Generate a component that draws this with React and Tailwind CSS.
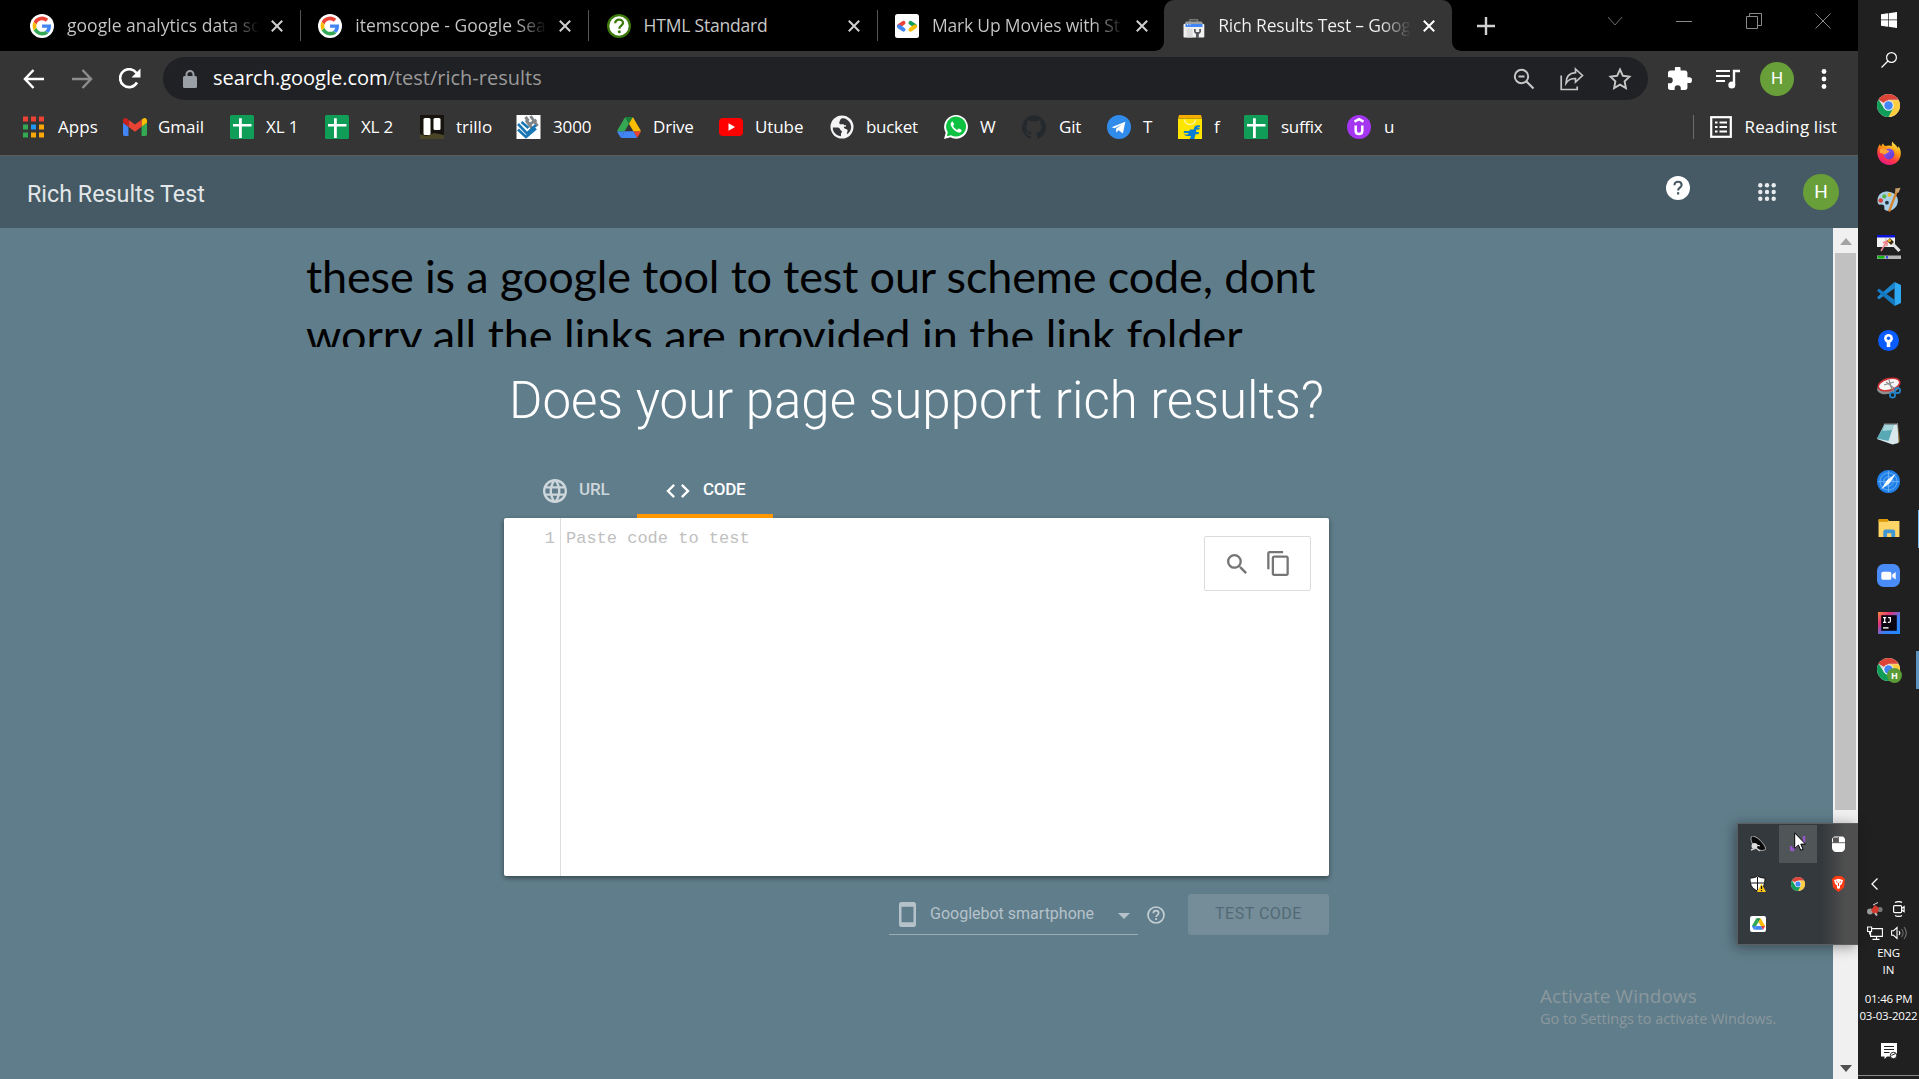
import React from "react";

/* ---------- icons ---------- */
const GoogleG = () => (
  <svg viewBox="0 0 24 24" className="h-6 w-6 shrink-0">
    <circle cx="12" cy="12" r="12" fill="#fff" />
    <g transform="translate(2.6 2.6) scale(.785)">
      <path fill="#4285F4" d="M23.5 12.3c0-.9-.1-1.5-.2-2.2H12v4.2h6.600c-.1 1.100-.8 2.800-2.400 3.900l3.600 2.800c2.300-2.100 3.700-5.100 3.700-8.700z" />
      <path fill="#34A853" d="M12 24c3.200 0 6-1.100 7.900-2.900l-3.700-2.900c-1 .7-2.400 1.200-4.200 1.200-3.200 0-5.900-2.100-6.900-5l-3.800 3C3.300 21.300 7.300 24 12 24z" />
      <path fill="#FBBC05" d="M5.100 14.400c-.3-.8-.4-1.600-.4-2.400s.2-1.600.4-2.400L1.300 6.600C.5 8.200 0 10 0 12s.5 3.800 1.300 5.400z" />
      <path fill="#EA4335" d="M12 4.700c2.200 0 3.700 1 4.600 1.800L20 3.200C18 1.200 15.200 0 12 0 7.300 0 3.300 2.700 1.300 6.600l3.800 3c1-2.900 3.700-4.900 6.900-4.900z" />
    </g>
  </svg>
);

const WhatwgIcon = () => (
  <svg viewBox="0 0 24 24" className="h-6 w-6 shrink-0">
    <circle cx="12" cy="12" r="12" fill="#3c790a" />
    <circle cx="12" cy="12" r="9.700" fill="#fff" />
    <path d="M8.200 9.200c0-2.200 1.700-3.600 3.900-3.600s3.900 1.400 3.900 3.400c0 2.700-3.700 2.700-3.700 5.800" fill="none" stroke="#3c790a" strokeWidth="2.300" />
    <circle cx="12.300" cy="17.700" r="1.500" fill="#3c790a" />
  </svg>
);

const DevelopersIcon = () => (
  <svg viewBox="0 0 24 24" className="h-6 w-6 shrink-0">
    <rect width="24" height="24" rx="2.500" fill="#fff" />
    <g strokeWidth="4" strokeLinecap="round">
      <path d="M8.500 8.800L4 11.900" stroke="#ea4335" />
      <path d="M4 12.500l4.500 3.100" stroke="#4285f4" />
      <path d="M15.500 8.800l4.500 3.100" stroke="#0f9d58" />
      <path d="M20 12.500l-4.500 3.100" stroke="#fbbc04" />
    </g>
  </svg>
);

const ToolboxIcon = () => (
  <svg viewBox="0 0 24 24" className="h-6 w-6 shrink-0">
    <path d="M8 8V5.800h7.500V8" fill="none" stroke="#777" strokeWidth="1.500" />
    <path d="M4 7.500h15.500l2.800 4H1.500z" fill="#9a9fa6" />
    <rect x="1.500" y="10" width="20.800" height="13.500" rx=".8" fill="#f1f1f1" />
    <rect x="3.500" y="10" width="17" height="3" fill="#4285f4" />
    <path d="M5 10.700h1M7.500 10.700h1" stroke="#fff" />
    <rect x="4.500" y="14.500" width="6" height="9" fill="#dcdcdc" />
    <path d="M12 15v3l2 2.300V24h2.800v-3.700l2.200-2.300v-3h-1.800v3h-3.400v-3z" fill="#55585c" />
  </svg>
);

const SheetPlus = () => (
  <svg viewBox="0 0 24 24" className="h-6 w-6 shrink-0">
    <rect width="24" height="24" rx="1.500" fill="#0f9d58" />
    <path d="M9 3.200h2.800v5.800h9.700v2.500h-9.700v11.500H9V11.500H3V9h6z" fill="#fff" />
  </svg>
);

const DriveIcon = ({ className }) => (
  <svg viewBox="0 0 87.300 78" className={className}>
    <path d="m6.600 66.850 3.850 6.650c.8 1.400 1.950 2.500 3.300 3.300l13.750-23.800h-27.500c0 1.550.4 3.100 1.200 4.500z" fill="#4285f4" />
    <path d="m43.650 25-13.750-23.800c-1.350.8-2.500 1.900-3.300 3.300l-25.400 44a9.060 9.060 0 0 0 -1.200 4.500h27.500z" fill="#34a853" />
    <path d="m73.550 76.800c1.350-.8 2.500-1.900 3.300-3.300l1.600-2.750 7.650-13.250c.8-1.400 1.200-2.950 1.200-4.500h-27.500l5.850 11.500z" fill="#ea4335" />
    <path d="m43.650 25 13.750-23.800c-1.350-.8-2.900-1.200-4.500-1.200h-18.500c-1.600 0-3.150.45-4.500 1.200z" fill="#188038" />
    <path d="m59.800 53h-32.300l-13.750 23.800c1.350.8 2.900 1.200 4.500 1.200h50.800c1.600 0 3.150-.45 4.500-1.200z" fill="#4285f4" />
    <path d="m73.400 26.500-12.700-22c-.8-1.400-1.950-2.500-3.300-3.300l-13.750 23.800 16.150 28h27.450c0-1.550-.4-3.100-1.200-4.500z" fill="#fbbc04" />
  </svg>
);

const ChromeIcon = ({ className }) => (
  <svg viewBox="0 0 24 24" className={className}>
    <circle cx="12" cy="12" r="12" fill="#e0e0e0" />
    <path d="M12 12L1.610 6A12 12 0 0 1 22.390 6H12z" fill="#db4437" />
    <path d="M12 6.500h10.680A12 12 0 0 1 12 24l4.800-9z" fill="#ffcd40" />
    <path d="M1.610 6A12 12 0 0 0 12 24l4.800-9.200L7.200 14.700z" fill="#0f9d58" />
    <circle cx="12" cy="12" r="5.500" fill="#f1f1f1" />
    <circle cx="12" cy="12" r="4.400" fill="#4285f4" />
  </svg>
);

const AppsIcon = () => (
  <svg viewBox="0 0 21 21" className="h-[22px] w-[21px] shrink-0">
    <g fill="#ea4335"><rect width="5" height="5" /><rect x="8" width="5" height="5" /><rect x="16" width="5" height="5" /></g>
    <rect y="8" width="5" height="5" fill="#34a853" />
    <rect x="8" y="8" width="5" height="5" fill="#2196f3" />
    <rect x="16" y="8" width="5" height="5" fill="#fba705" />
    <rect y="16" width="5" height="5" fill="#34a853" />
    <rect x="8" y="16" width="5" height="5" fill="#fba705" />
    <rect x="16" y="16" width="5" height="5" fill="#fba705" />
  </svg>
);

const GmailIcon = () => (
  <svg viewBox="52 42 88 66" className="h-[18px] w-6 shrink-0">
    <path fill="#4285f4" d="M58 108h14V74L52 59v43c0 3.320 2.690 6 6 6" />
    <path fill="#34a853" d="M120 108h14c3.320 0 6-2.690 6-6V59l-20 15" />
    <path fill="#fbbc04" d="M120 48v26l20-15v-8c0-7.420-8.470-11.650-14.400-7.200" />
    <path fill="#ea4335" d="M72 74V48l24 18 24-18v26L96 92" />
    <path fill="#c5221f" d="M52 51v8l20 15V48l-5.600-4.200c-5.940-4.450-14.400-.22-14.400 7.200" />
  </svg>
);

const TrelloPhotoIcon = () => (
  <svg viewBox="0 0 24 24" className="h-6 w-6 shrink-0">
    <rect width="24" height="24" fill="#17140f" />
    <path d="M0 19l6 2 8-3 10 2v4H0z" fill="#4b4528" />
    <rect x="3.500" y="3" width="7" height="17" rx="1.500" fill="#fff" />
    <rect x="13.500" y="3" width="7" height="12" rx="1.500" fill="#fff" />
  </svg>
);

const ThreeThousandIcon = () => (
  <svg viewBox="0 0 24 24" className="h-6 w-[25px] shrink-0">
    <rect width="24" height="24" fill="#fff" />
    <g fill="none" strokeWidth="3">
      <path d="M9 2l3 4M14 1l7 10M12 10l8-5M9.500 5l7 9.500" stroke="#808487" />
      <path d="M1.500 9l9 9.500 9-8.500M1.500 14.500l8 7.500 10-8.500M5 7l7 6" stroke="#1976b5" strokeWidth="2.600" />
    </g>
  </svg>
);

const YoutubeIcon = () => (
  <svg viewBox="0 0 24 18" className="h-[18px] w-6 shrink-0">
    <rect width="24" height="18" rx="4" fill="#f00" />
    <path d="M9.500 5.200v7.600l6.600-3.800z" fill="#fff" />
  </svg>
);

const GlobeIcon = () => (
  <svg viewBox="0 0 24 24" className="h-6 w-6 shrink-0">
    <circle cx="12" cy="12" r="11.500" fill="#f4f4f4" />
    <path d="M2.800 12.500c2.700 0 4.200-.3 6 .3 1.200.5 1 2 2.200 2.600 1.200.5 1.200 1.600.3 2.500-.8.900.2 2.200-.6 3.300C6 20.600 2.700 17 2.800 12.500z" fill="#35363a" />
    <path d="M10.300 4.800c1-1.700 4-1.800 5.700-.8 3 1.500 5 4.500 5.200 8-.2 3.500-2 6-4.200 7.300-.6-1.500.8-2.500.6-4-.3-1.500-2.600-1-3.500-2.300-.9-1.500.8-2.700-.3-3.500-1.500-.8-3.300.5-4.300-.8-.8-1.500.5-2.500.8-3.900z" fill="#35363a" />
    <path d="M12 11.300l4-.5" stroke="#f4f4f4" strokeWidth="1.400" />
  </svg>
);

const WhatsappIcon = () => (
  <svg viewBox="0 0 24 24" className="h-6 w-6 shrink-0">
    <path d="M0 24l1.700-6.200A11.900 11.900 0 1 1 6.300 22.300z" fill="#fff" />
    <path d="M2.800 21.200l1-4A10 10 0 1 1 7 20.200z" fill="#0dc143" />
    <path d="M8.200 6.500c-1.700 1-2 2.800-.8 5 1.500 2.800 3.800 4.800 6.300 5.800 2 .8 3.500 0 4-1.800.2-.7-2.700-2.200-3.200-2l-1.300 1.400c-1.800-.7-3.200-2-4.100-3.800l1-1.400c.1-.5-1-3-1.900-3.200z" fill="#fff" />
  </svg>
);

const GithubIcon = () => (
  <svg viewBox="0 0 24 24" className="h-6 w-6 shrink-0">
    <path fill="#24292e" d="M12 .3a12 12 0 0 0-3.800 23.400c.6.1.8-.3.8-.6v-2c-3.300.7-4-1.600-4-1.600-.6-1.400-1.400-1.800-1.400-1.800-1-.7.1-.7.1-.7 1.200 0 1.900 1.200 1.900 1.200 1 1.800 2.800 1.300 3.500 1 0-.8.4-1.300.7-1.600-2.700-.3-5.500-1.300-5.500-6 0-1.200.5-2.300 1.300-3.100-.2-.4-.6-1.600 0-3.200 0 0 1-.3 3.400 1.200a11.500 11.500 0 0 1 6 0c2.300-1.500 3.300-1.200 3.300-1.200.6 1.600.2 2.800 0 3.200.9.800 1.300 1.900 1.300 3.200 0 4.600-2.800 5.600-5.500 5.900.5.400.9 1 .9 2.200v3.300c0 .3.100.7.800.6A12 12 0 0 0 12 .3" />
  </svg>
);

const TelegramIcon = () => (
  <svg viewBox="0 0 24 24" className="h-6 w-6 shrink-0">
    <circle cx="12" cy="12" r="12" fill="#318bea" />
    <path d="M4.500 12.200l13.800-5.500-2.400 11.800-4.300-3.200-2.300 2.300-.3-3.900 5.500-4.200-6.700 3.700z" fill="#fff" />
  </svg>
);

const FlipkartIcon = () => (
  <svg viewBox="0 0 24 24" className="h-6 w-6 shrink-0">
    <path d="M0 3.500h24V24H0z" fill="#ffe500" />
    <path d="M1 0h22l1 3.500H0z" fill="#f5ae00" />
    <path d="M6.500 4.500c.5 6.500 10.500 6.500 11 0" fill="none" stroke="#fff6a8" strokeWidth="1.300" />
    <path d="M22 10.500c-4.500-.8-5.800 1.200-6.300 4H12l-.7 1.600h-5l-.8 2h5.200l-1 1.400H5.500l3 1.500H13L11.800 24h4.500l1.200-4.800h3l.5-2.200h-3l.5-2.500h2.800l.5-1.800h-2.600c.3-.6 1-.7 2.500-.5z" fill="#047bd5" />
  </svg>
);

const UdemyIcon = () => (
  <svg viewBox="0 0 24 24" className="h-6 w-6 shrink-0">
    <circle cx="12" cy="12" r="12" fill="#a435f0" />
    <path d="M7.500 6.700L12 4.200l4.500 2.500M8.700 10.500v5.300c0 2 1.300 3.300 3.300 3.300s3.300-1.300 3.300-3.300v-5.300" fill="none" stroke="#fff" strokeWidth="2.500" />
  </svg>
);

const Cross = ({ className }) => (
  <svg viewBox="0 0 12 12" className={className}>
    <path d="M.8.800l10.400 10.400M11.200.800L.8 11.200" stroke="currentColor" strokeWidth="2" fill="none" />
  </svg>
);

/* ---------- browser chrome ---------- */
const ui = "font-['Open_Sans','Noto_Sans',sans-serif]";

const fadeDim = "bg-linear-to-r from-[#c8c8c8] from-84% to-transparent bg-clip-text text-transparent";
const fadeLit = "bg-linear-to-r from-[#f4f4f4] from-84% to-transparent bg-clip-text text-transparent";

const tabs = [
  { icon: <GoogleG />, title: "google analytics data sc", track: "tracking-[0.03px]", fade: true, divider: true },
  { icon: <GoogleG />, title: "itemscope - Google Sea", track: "tracking-[0px]", fade: true, divider: true },
  { icon: <WhatwgIcon />, title: "HTML Standard", track: "tracking-[-0.2px]", fade: false, divider: true },
  { icon: <DevelopersIcon />, title: "Mark Up Movies with St", track: "tracking-[-0.18px]", fade: true, divider: false },
];

function Tab({ icon, title, track, fade, divider }) {
  return (
    <div className="flex h-[51px] w-[288.300px] shrink-0 items-center pl-[13px]">
      {icon}
      <span className={`mb-px ml-[13px] w-[192px] overflow-hidden text-[17.500px] leading-6 whitespace-nowrap ${track} ${fade ? fadeDim : "text-[#c8c8c8]"}`}>{title}</span>
      <Cross className="ml-[12px] h-3 w-3 shrink-0 text-[#d0d0d0]" />
      <span className={`ml-[17px] h-[31px] w-px shrink-0 ${divider ? "bg-[#555]" : "bg-transparent"}`} />
    </div>
  );
}

function TabStrip() {
  return (
    <div className="flex h-[51px] bg-black pl-[17px]">
      {tabs.map((t) => (
        <Tab key={t.title} {...t} />
      ))}
      <div className="relative -ml-[6px] flex h-[51px] w-[288px] shrink-0 items-center rounded-t-[10px] bg-[#353535] pl-[18px]">
        <svg viewBox="0 0 10 10" className="absolute bottom-0 -left-[10px] h-[10px] w-[10px]"><path d="M10 0v10H0C6 10 10 6 10 0z" fill="#353535" /></svg>
        <svg viewBox="0 0 10 10" className="absolute -right-[10px] bottom-0 h-[10px] w-[10px]"><path d="M0 0v10h10C4 10 0 6 0 0z" fill="#353535" /></svg>
        <ToolboxIcon />
        <span className={`mb-px ml-3 w-[193px] overflow-hidden text-[17.500px] leading-6 tracking-[-0.2px] whitespace-nowrap ${fadeLit}`}>Rich Results Test – Goog</span>
        <Cross className="ml-[12px] h-3 w-3 shrink-0 text-white" />
      </div>
      <div className="flex flex-1 items-center justify-between pr-[27px] pl-[25px]">
        <svg viewBox="0 0 18 18" className="h-[18px] w-[18px]"><path d="M9 0v18M0 9h18" stroke="#d0d0d0" strokeWidth="2.400" /></svg>
        <div className="mb-[9px] flex items-center gap-[53.500px] text-[#8a8a8a]">
          <svg viewBox="0 0 16 10" className="h-[10px] w-4"><path d="M1 1l7 8 7-8" fill="none" stroke="#6a6a6a" /></svg>
          <svg viewBox="0 0 16 16" className="h-4 w-4"><path d="M0 8.500h16" stroke="currentColor" /></svg>
          <svg viewBox="0 0 16 16" className="h-4 w-4"><path d="M.5 3.500h11v12H.5zM3.500 3V.5h12v12H12" fill="none" stroke="currentColor" /></svg>
          <svg viewBox="0 0 16 16" className="h-4 w-4"><path d="M.5.500l15 15M15.500.500l-15 15" stroke="currentColor" /></svg>
        </div>
      </div>
    </div>
  );
}

function Toolbar() {
  return (
    <div className="flex h-[55px] items-center bg-[#353535] pl-[23px]">
      <svg viewBox="0 0 22 20" className="h-5 w-[22px]"><path d="M10.500 1L2 10l8.500 9M2 10h19" fill="none" stroke="#fff" strokeWidth="2.500" /></svg>
      <svg viewBox="0 0 22 20" className="ml-[26px] h-5 w-[22px]"><path d="M11.500 1L20 10l-8.500 9M20 10H1" fill="none" stroke="#8c8c8c" strokeWidth="2.500" /></svg>
      <svg viewBox="0 0 22 22" className="ml-[26px] h-[22px] w-[22px]"><path d="M18 14.500A9 9 0 1 1 17.500 5" fill="none" stroke="#fff" strokeWidth="2.600" /><path d="M21.500.5v9h-9z" fill="#fff" /></svg>
      <div className="ml-[22px] flex h-[43px] w-[1485px] items-center rounded-full bg-[#202124] pr-[16px] pl-[20px]">
        <svg viewBox="0 0 14 18" className="h-[18px] w-[14px]"><rect y="6" width="14" height="12" rx="1.500" fill="#9aa0a6" /><path d="M3.500 7V4.500a3.500 3.500 0 0 1 7 0V7" fill="none" stroke="#9aa0a6" strokeWidth="2" /></svg>
        <span className="mb-[2px] ml-[16px] flex-1 text-[20px] leading-7 text-[#9a9a9a]"><span className="text-white">search.google.com</span>/test/rich-results</span>
        <div className="flex items-center gap-[25px] text-[#c6c6c6]">
          <svg viewBox="0 0 22 22" className="h-[22px] w-[22px]"><circle cx="8.500" cy="8.500" r="6.700" fill="none" stroke="currentColor" strokeWidth="2" /><path d="M5.500 8.500h6M13.500 13.500l7 7" stroke="currentColor" strokeWidth="2.200" /></svg>
          <svg viewBox="0 0 24 24" className="h-6 w-6"><path d="M1.200 8.500v14h16v-3" fill="none" stroke="currentColor" strokeWidth="1.700" /><path d="M15.500 2l7 6.500-7 6.500v-3.500c-4.500 0-7.500 1.300-9.500 4.700 0-6 3-10 9.500-10.500z" fill="none" stroke="currentColor" strokeWidth="1.700" /></svg>
          <svg viewBox="0 0 24 24" className="-ml-px h-6 w-6"><path d="M12 2.500l2.900 6.300 6.600.8-4.900 4.700 1.300 6.800-5.900-3.400-5.900 3.400 1.300-6.800-4.900-4.700 6.600-.8z" fill="none" stroke="currentColor" strokeWidth="1.900" /></svg>
        </div>
      </div>
      <div className="flex flex-1 items-center pl-[20px]">
        <svg viewBox="2 2 21 20" className="h-[23px] w-[24px]"><path fill="#fff" d="M20.500 11H19V7c0-1.100-.9-2-2-2h-4V3.500a2.500 2.500 0 0 0-5 0V5H4c-1.100 0-2 .9-2 2v3.800h1.500a2.700 2.700 0 0 1 0 5.400H2V20c0 1.100.9 2 2 2h3.800v-1.500a2.700 2.700 0 0 1 5.400 0V22H17c1.100 0 2-.9 2-2v-4h1.500a2.500 2.500 0 0 0 0-5z" /></svg>
        <svg viewBox="0 0 24 20" className="ml-[24px] h-5 w-6"><path d="M0 2h14M0 7h14M0 12h9" stroke="#fff" strokeWidth="2.200" /><path d="M18 16V2h6" fill="none" stroke="#fff" strokeWidth="2.400" /><circle cx="15.800" cy="16" r="3.500" fill="#fff" /></svg>
        <span className="ml-[20px] flex h-[34px] w-[34px] items-center justify-center rounded-full bg-[#689f38] font-[Roboto,sans-serif] text-[17px] text-white">H</span>
        <svg viewBox="0 0 6 20" className="ml-[27px] h-5 w-[6px]"><g fill="#fff"><circle cx="3" cy="2.500" r="2.400" /><circle cx="3" cy="10" r="2.400" /><circle cx="3" cy="17.500" r="2.400" /></g></svg>
      </div>
    </div>
  );
}

const bookmarks = [
  { icon: <AppsIcon />, label: "Apps", box: "w-[100px] gap-[14px]", track: "tracking-[0.1px]" },
  { icon: <GmailIcon />, label: "Gmail", box: "w-[107px] gap-[11px]", track: "tracking-[0px]" },
  { icon: <SheetPlus />, label: "XL 1", box: "w-[95px] gap-3", track: "tracking-[-0.1px]" },
  { icon: <SheetPlus />, label: "XL 2", box: "w-[95px] gap-3", track: "tracking-[-0.2px]" },
  { icon: <TrelloPhotoIcon />, label: "trillo", box: "w-[96px] gap-3", track: "tracking-[0px]" },
  { icon: <ThreeThousandIcon />, label: "3000", box: "w-[101px] gap-3", track: "tracking-[-0.1px]" },
  { icon: <DriveIcon className="h-[21px] w-6 shrink-0" />, label: "Drive", box: "w-[102px] gap-3", track: "tracking-[-0.2px]" },
  { icon: <YoutubeIcon />, label: "Utube", box: "w-[111px] gap-3", track: "tracking-[-0.1px]" },
  { icon: <GlobeIcon />, label: "bucket", box: "w-[114px] gap-3", track: "tracking-[-0.3px]" },
  { icon: <WhatsappIcon />, label: "W", box: "w-[78px] gap-3", track: "tracking-[-0.4px]" },
  { icon: <GithubIcon />, label: "Git", box: "w-[85px] gap-[13px]", track: "tracking-[-0.2px]" },
  { icon: <TelegramIcon />, label: "T", box: "w-[71px] gap-3", track: "tracking-[-0.4px]" },
  { icon: <FlipkartIcon />, label: "f", box: "w-[66px] gap-3", track: "tracking-[-0.4px]" },
  { icon: <SheetPlus />, label: "suffix", box: "w-[103px] gap-[13px]", track: "tracking-[-0.3px]" },
  { icon: <UdemyIcon />, label: "u", box: "w-[60px] gap-[13px]", track: "tracking-[-0.4px]" },
];

function BookmarksBar() {
  return (
    <div className="flex h-[50px] items-center border-b border-[#5f5c5d] bg-[#353535] pb-[7px] pl-[23px] text-[17px] leading-6 text-white">
      {bookmarks.map((b) => (
        <div key={b.label} className={`flex shrink-0 items-center whitespace-nowrap ${b.box}`}>
          {b.icon}
          <span className={b.track}>{b.label}</span>
        </div>
      ))}
      <div className="ml-auto flex items-center pr-[21px]">
        <span className="h-6 w-px bg-[#6c6c6c]" />
        <svg viewBox="0 0 22 22" className="ml-4 h-[22px] w-[22px]"><rect x="1.200" y="1.200" width="19.600" height="19.600" fill="none" stroke="#fff" strokeWidth="2.200" /><path d="M5 6.500h2.500M5 11h2.500M5 15.500h2.500M9.500 6.500H17M9.500 11H17M9.500 15.500H17" stroke="#fff" strokeWidth="2" /></svg>
        <span className="ml-[13px] tracking-[0.12px]">Reading list</span>
      </div>
    </div>
  );
}

/* ---------- page ---------- */
function PageHeader() {
  return (
    <header className="flex h-[72px] items-center bg-[#455a64] pr-[19px] pl-[27px] font-[Roboto,sans-serif]">
      <h1 className="flex-1 pt-[3px] text-[23.300px] leading-8 text-[#e3e7e9]">Rich Results Test</h1>
      <svg viewBox="0 0 24 24" className="mb-[9px] h-[24px] w-[24px]"><circle cx="12" cy="12" r="12" fill="#fff" /><path d="M8.500 9.200c0-2.100 1.500-3.500 3.600-3.500s3.500 1.300 3.500 3.200c0 2.600-3.500 2.900-3.500 5.600" fill="none" stroke="#455a64" strokeWidth="2.100" /><rect x="11" y="16.200" width="2.200" height="2.300" fill="#455a64" /></svg>
      <svg viewBox="0 0 18 18" className="ml-[68px] h-[18px] w-[18px]"><g fill="#e9ecee"><circle cx="2.300" cy="2.300" r="2.200" /><circle cx="9" cy="2.300" r="2.200" /><circle cx="15.700" cy="2.300" r="2.200" /><circle cx="2.300" cy="9" r="2.200" /><circle cx="9" cy="9" r="2.200" /><circle cx="15.700" cy="9" r="2.200" /><circle cx="2.300" cy="15.700" r="2.200" /><circle cx="9" cy="15.700" r="2.200" /><circle cx="15.700" cy="15.700" r="2.200" /></g></svg>
      <span className="ml-[27px] flex h-9 w-9 items-center justify-center rounded-full bg-[#689f38] pt-px text-[19px] text-white">H</span>
    </header>
  );
}

function CodeCard() {
  return (
    <div className="flex h-[358px] w-[825px] rounded-[2px] bg-white font-['Liberation_Mono',monospace] text-[17px] text-[#c0c0c0] shadow-[0_2px_5px_rgba(0,0,0,0.45)]">
      <div className="h-full w-[57px] border-r border-[#ddd] pt-[9px] pr-[5px] text-right leading-6">1</div>
      <div className="flex-1 pt-[9px] pl-[5px] leading-6">Paste code to test</div>
      <div className="mt-[18px] mr-[18px] flex h-[55px] w-[107px] items-center justify-center gap-[20px] rounded-[2px] border border-[#dcdcdc]">
        <svg viewBox="3 3 17.500 17.500" className="h-5 w-5"><path fill="#757575" d="M15.500 14h-.79l-.28-.27A6.470 6.470 0 0 0 16 9.500 6.500 6.500 0 1 0 9.500 16c1.610 0 3.090-.59 4.230-1.570l.27.28v.79l5 4.990L20.490 19l-4.990-5zm-6 0a4.500 4.500 0 1 1 0-9 4.500 4.500 0 0 1 0 9z" /></svg>
        <svg viewBox="2 1 19 22" className="h-[25px] w-[22px]"><path fill="#757575" d="M16 1H4c-1.100 0-2 .9-2 2v14h2V3h12V1zm3 4H8c-1.100 0-2 .9-2 2v14c0 1.100.9 2 2 2h11c1.100 0 2-.9 2-2V7c0-1.100-.9-2-2-2zm0 16H8V7h11v14z" /></svg>
      </div>
    </div>
  );
}

function Main() {
  return (
    <main className="flex-1 overflow-hidden bg-[#607d8b]">
      <div className="ml-[306px] h-[119px] overflow-hidden pt-[19px] font-[Lato,sans-serif] text-[45px] leading-[58.600px] whitespace-nowrap text-black">
        <p className="tracking-[-0.14px]">these is a google tool to test our scheme code, dont</p>
        <p className="tracking-[-0.04px]">worry all the links are provided in the link folder</p>
      </div>
      <div className="ml-[504px] w-[825px] font-[Roboto,sans-serif]">
        <h2 className="mt-[24px] text-center text-[51px] leading-[60px] font-light whitespace-nowrap text-white">Does your page support rich results?</h2>
        <div className="mt-[28px] flex h-[59px] text-[17px] font-medium">
          <div className="flex w-[133px] items-center gap-3 pt-1 pl-[39px] text-[#cdd6da]">
            <svg viewBox="2 2 20 20" className="h-6 w-6"><path fill="currentColor" d="M11.990 2C6.470 2 2 6.480 2 12s4.470 10 9.990 10C17.520 22 22 17.520 22 12S17.520 2 11.990 2zm6.930 6h-2.950a15.650 15.650 0 0 0-1.380-3.560A8.030 8.030 0 0 1 18.920 8zM12 4.040c.83 1.200 1.480 2.530 1.910 3.960h-3.820c.43-1.430 1.080-2.760 1.910-3.960zM4.260 14C4.100 13.360 4 12.690 4 12s.1-1.360.26-2h3.380c-.08.660-.14 1.320-.14 2s.06 1.340.14 2H4.260zm.82 2h2.950c.32 1.250.78 2.450 1.380 3.560A7.990 7.990 0 0 1 5.080 16zm2.950-8H5.080a7.990 7.990 0 0 1 4.330-3.560A15.650 15.650 0 0 0 8.030 8zM12 19.960c-.83-1.200-1.480-2.530-1.910-3.960h3.820A14.090 14.090 0 0 1 12 19.960zM14.340 14H9.660c-.09-.66-.16-1.320-.16-2s.07-1.350.16-2h4.680c.09.65.16 1.320.16 2s-.07 1.340-.16 2zm.25 5.560c.6-1.110 1.060-2.310 1.380-3.560h2.950a8.030 8.030 0 0 1-4.330 3.560zM16.360 14c.08-.66.14-1.320.14-2s-.06-1.340-.14-2h3.380c.16.64.26 1.310.26 2s-.1 1.360-.26 2h-3.380z" /></svg>
            <span className="pb-px tracking-[-0.1px]">URL</span>
          </div>
          <div className="flex w-[136px] items-center gap-[13px] border-b-4 border-[#ff9800] pt-2 pl-[29px] text-white">
            <svg viewBox="2 6 20 12" className="h-[14px] w-6"><path fill="currentColor" d="M9.400 16.600L4.800 12l4.600-4.600L8 6l-6 6 6 6 1.400-1.400zm5.200 0l4.600-4.600-4.600-4.600L16 6l6 6-6 6-1.400-1.400z" /></svg>
            <span className="pb-px tracking-[-0.3px]">CODE</span>
          </div>
        </div>
        <CodeCard />
        <div className="mt-[18px] flex h-[41px] justify-end">
          <div className="flex h-[41px] w-[249px] items-center border-b border-[#9aabb4] pl-[10px] text-[#b5c2c9]">
            <svg viewBox="0 0 17 25" className="h-[25px] w-[17px]"><path fill="currentColor" fillRule="evenodd" d="M2.500 0h12A2.500 2.500 0 0 1 17 2.500v20a2.500 2.500 0 0 1-2.500 2.500h-12A2.500 2.500 0 0 1 0 22.500v-20A2.500 2.500 0 0 1 2.500 0zM2.500 4.700v15.600h12V4.700z" /></svg>
            <span className="mb-px ml-[14px] text-[16px] leading-6 whitespace-nowrap">Googlebot smartphone</span>
            <svg viewBox="0 0 12 6" className="mt-1 mr-[8px] ml-auto h-[6px] w-3"><path d="M0 0h12L6 6z" fill="currentColor" /></svg>
          </div>
          <svg viewBox="0 0 18 18" className="mt-[12px] ml-[9px] h-[18px] w-[18px] text-[#c3ced3]"><circle cx="9" cy="9" r="8" fill="none" stroke="currentColor" strokeWidth="1.700" /><path d="M6.300 7.200c0-1.600 1.200-2.600 2.700-2.600s2.700 1 2.700 2.500c0 1.800-2.600 2.100-2.600 4" fill="none" stroke="currentColor" strokeWidth="1.700" /><rect x="8.200" y="12.200" width="1.800" height="1.800" fill="currentColor" /></svg>
          <button className="ml-[23px] h-[41px] w-[141px] rounded-[3px] bg-[#758d99] pb-[2px] text-[16px] tracking-[0.500px] text-[#526a76]">TEST CODE</button>
        </div>
      </div>
    </main>
  );
}

function Scrollbar() {
  return (
    <div className="flex w-[25px] flex-col items-center bg-[#f0f0f0]">
      <svg viewBox="0 0 12 7" className="mt-[10px] h-[7px] w-3"><path d="M0 7l6-7 6 7z" fill="#a3a3a3" /></svg>
      <div className="mt-2 h-[557px] w-[21px] bg-[#c1c1c1]" />
      <svg viewBox="0 0 12 7" className="mt-auto mb-[7px] h-[7px] w-3"><path d="M0 0l6 7 6-7z" fill="#505050" /></svg>
    </div>
  );
}

/* ---------- taskbar ---------- */
const dockIcons = [
  <ChromeIcon className="h-[23px] w-[23px]" />,
  <svg viewBox="0 0 24 24" className="h-6 w-6">
    <defs>
      <linearGradient id="fx" x1=".8" y1="0" x2=".3" y2="1"><stop offset="0" stopColor="#fff44f" /><stop offset=".4" stopColor="#ff980e" /><stop offset=".7" stopColor="#ff3647" /><stop offset="1" stopColor="#e31587" /></linearGradient>
      <linearGradient id="fxg" x1="0" y1="0" x2="1" y2="1"><stop offset="0" stopColor="#9059ff" /><stop offset="1" stopColor="#5b37c4" /></linearGradient>
    </defs>
    <path d="M15.500.500c-1 1.800-.7 3.500-.5 4.500-2-1-5-.6-6.500 0C7 4.500 6.500 3.500 6.300 2.500 5 3.200 4.500 4.500 4.200 5.500 3.500 5 3.300 4.200 3 3 .8 6 0 9 .3 12.500.8 19 6 24 12.200 24 19 24 24 18.500 23.800 12c-.1-3.500-1.500-6-2.800-7 .3.900.3 1.500 0 2.200C19.500 4 16.500 3 15.500.500z" fill="url(#fx)" />
    <circle cx="12" cy="13" r="5.400" fill="url(#fxg)" />
    <path d="M3 8c3-1.500 6 0 7.500 1.500 1 .2 2 .3 1.800 1-.7 1.500-3 1-3.300 2.600C6.500 14 6 11.500 3 12z" fill="#ffa436" />
  </svg>,
  <svg viewBox="0 0 24 24" className="h-[25px] w-[25px]">
    <path d="M1.500 12C2 6.500 7 4 12 4.500s9.500 4 9 9.500-5 9-9.500 9c-3 0-4-1.500-3.500-3.500.5-2.500-2-3-4.500-2.500-1.500 0-2.300-2-2-5z" fill="#a9cfe6" />
    <circle cx="4.500" cy="13" r="2.200" fill="#d8433b" /><circle cx="8" cy="9" r="2" fill="#58b548" /><circle cx="13" cy="7.500" r="2" fill="#f2b52c" /><circle cx="10.500" cy="15" r="1.800" fill="#20323e" />
    <path d="M20 4L12.500 23.500" stroke="#d9822b" strokeWidth="2.200" /><path d="M18.500 1.500l5-.8-1.700 4.600-3.300.2z" fill="#c9a06b" />
  </svg>,
  <svg viewBox="0 0 24 24" className="h-6 w-6">
    <rect x="0" y="1" width="18" height="11" fill="#f3f3f3" /><rect x="0" y="0" width="18" height="2.500" fill="#0a12d8" />
    <path d="M9 3v9" stroke="#bbb" /><path d="M4 16l6-10M6 8l4-2v5" stroke="#f2838b" strokeWidth="1.500" fill="none" />
    <path d="M13 6l9.500 10" stroke="#e5e5e5" strokeWidth="3.200" /><path d="M11.500 4.500l4 4" stroke="#3a2c12" strokeWidth="4" /><circle cx="12.500" cy="5.500" r="1.600" fill="#f2b32c" />
    <rect y="20.500" width="24" height="3.500" fill="#b5b5b5" /><rect x=".5" y="21" width="7" height="2.500" fill="#14b514" /><rect x="9" y="21" width="2" height="2.500" fill="#3a49e5" />
  </svg>,
  <svg viewBox="0 0 24 24" className="h-6 w-6">
    <path d="M17.500 0L24 3v18l-6.500 3z" fill="#2fa8f3" /><path d="M17.500 0L0 15.200l1.800 2.300L18 6z" fill="#1b86cf" /><path d="M17.500 24L0 8.800l1.800-2.300L18 18z" fill="#1479c0" />
  </svg>,
  <svg viewBox="0 0 24 24" className="h-[21px] w-[21px]">
    <circle cx="12" cy="12" r="12" fill="#0b5cff" /><circle cx="12" cy="9.500" r="5" fill="#fff" /><path d="M10 12h4v7.500h-4z" fill="#fff" /><circle cx="12" cy="9.500" r="2" fill="#0b5cff" />
  </svg>,
  <svg viewBox="0 0 24 24" className="h-6 w-6">
    <ellipse cx="11" cy="12" rx="11" ry="6" transform="rotate(-12 11 12)" fill="#8f8f8f" /><ellipse cx="12" cy="8.500" rx="11" ry="5.800" transform="rotate(-15 12 8.500)" fill="#f7f7f7" stroke="#cf3439" strokeWidth="1.600" />
    <path d="M7 9l10-3M12 4l3 10M9 6l8 6" stroke="#8b8b8b" strokeWidth="1.200" /><circle cx="15.500" cy="19" r="2.600" fill="none" stroke="#2484c9" strokeWidth="1.800" /><circle cx="20.500" cy="14.500" r="2.600" fill="none" stroke="#2484c9" strokeWidth="1.800" />
  </svg>,
  <svg viewBox="0 0 24 24" className="mb-1 h-6 w-6">
    <path d="M21 3.500l2 17-3 1z" fill="#8a6a36" /><path d="M8 2h12.500l1 20-6 1.500L0 18z" fill="#d8e8ec" /><path d="M8 3h9l-5.500 17L0 17.500z" fill="#58a9b5" /><path d="M8 3h9l-2 6-9.500 1z" fill="#a5d5db" /><path d="M8 2h12v1.500H8z" fill="#555" />
  </svg>,
  <svg viewBox="0 0 24 24" className="h-[23px] w-[23px]">
    <circle cx="12" cy="12" r="12" fill="#1f7fe8" /><g fill="none" stroke="#68b0f5"><circle cx="12" cy="12" r="5" /><circle cx="12" cy="12" r="9" /><path d="M12 1v22M1 12h22" /></g><path d="M19.500 4L13.500 13.500 4.500 20l6-9.500z" fill="#fff" />
  </svg>,
  <svg viewBox="0 0 24 20" className="h-[19px] w-6">
    <path d="M1 1h10l1 1h11v17H1z" fill="#ffd567" /><path d="M1 0h10v3H1z" fill="#dc9a0a" /><path d="M6 19v-6.500l1.500-1.500h9.500l1.500 1.500V19h-4v-4H10v4z" fill="#3f97d3" />
  </svg>,
  <svg viewBox="0 0 24 24" className="h-[23px] w-[23px]">
    <rect width="24" height="24" rx="7" fill="#4a8cf7" /><rect x="4.500" y="8" width="10.500" height="8.500" rx="2" fill="#fff" /><path d="M16 11l3.500-2.700v8L16 13.600z" fill="#fff" />
  </svg>,
  <svg viewBox="0 0 24 24" className="h-[22px] w-[22px]">
    <defs><linearGradient id="ij" x1="0" y1="0" x2="1" y2="1"><stop offset="0" stopColor="#fc8a3c" /><stop offset=".3" stopColor="#e0327a" /><stop offset=".6" stopColor="#3d7ff5" /><stop offset="1" stopColor="#1c8bff" /></linearGradient></defs>
    <rect width="24" height="24" fill="url(#ij)" /><rect x="3.500" y="3.500" width="17" height="17" fill="#0a0310" /><path d="M5.500 6.200h3.500M7.300 6v5.500M5.500 11.300h3.500M11 6.200h3M13.500 6v4c0 1.300-1.500 1.500-2.700 1" stroke="#fff" strokeWidth="1.300" fill="none" /><path d="M5.500 17.300h6" stroke="#fff" strokeWidth="1.500" />
  </svg>,
  <span className="relative h-[23px] w-[23px]">
    <ChromeIcon className="h-[23px] w-[23px]" />
    <span className="absolute top-[10px] left-[10px] flex h-[15px] w-[15px] items-center justify-center rounded-full bg-[#5a9b35] text-[9px] font-bold text-white">H</span>
  </span>,
];

function Taskbar() {
  return (
    <aside className="relative flex w-[61px] shrink-0 flex-col items-center bg-[#202020] text-white">
      <svg viewBox="0 0 16 16" className="mt-3 h-4 w-4"><path d="M0 2.300L7 1.300v6.300H0zM7.700 1.200L16 0v7.600H7.700zM0 8.300h7v6.400L0 13.700zM7.700 8.300H16V16l-8.300-1.200z" fill="#fff" /></svg>
      <svg viewBox="0 0 16 16" className="mt-6 h-4 w-4"><circle cx="10.500" cy="5.500" r="4.900" fill="none" stroke="#fff" strokeWidth="1.200" /><path d="M7 9L.5 15.500" stroke="#fff" strokeWidth="1.300" /></svg>
      <div className="mt-[14px] flex flex-col">
        {dockIcons.map((icon, i) => (
          <span key={i} className="flex h-[47px] w-[61px] items-center justify-center">{icon}</span>
        ))}
      </div>
      <div className="mt-auto flex flex-col items-center text-[11.500px] leading-[17px]">
        <svg viewBox="0 0 7 12" className="mr-[28px] mb-[6px] h-3 w-[7px]"><path d="M6.500.500L1 6l5.500 5.500" fill="none" stroke="#fff" strokeWidth="1.300" /></svg>
        <div className="mr-[2px] grid h-[48px] grid-cols-2 place-items-center gap-x-[8px]">
          <svg viewBox="0 0 16 14" className="h-[14px] w-4"><circle cx="3" cy="9.500" r="3" fill="#9b9b9b" /><circle cx="13" cy="7.500" r="2.600" fill="#777" /><path d="M4 8l4-5 4 3-2 6-4-1z" fill="#d5392c" /><path d="M6 3l5-2.500" stroke="#ddd" /><path d="M8 11l2 2.500" stroke="#bbb" strokeWidth="2" /></svg>
          <svg viewBox="0 0 16 16" className="h-4 w-4" fill="none" stroke="#fff" strokeWidth="1.200"><rect x="2.600" y="4.600" width="8" height="7" rx="1" /><path d="M10.600 7.500l2.500-1.800v5l-2.500-1.800M4 1.500c2.500-1.200 5-1.200 7 0M4 14.500c2.500 1.200 5 1.200 7 0" /></svg>
          <svg viewBox="0 0 16 14" className="h-[14px] w-4" fill="none" stroke="#fff" strokeWidth="1.100"><path d="M5 2.600h10.400v7.800H3.600V6M9.500 10.400v3M5.500 13.400h7M.6 1h4v4.500h-4zM2.600 5.500v3" /></svg>
          <svg viewBox="0 0 16 14" className="h-[14px] w-4" fill="none" stroke="#fff" strokeWidth="1.100"><path d="M.6 4.700h2L6 1.500v11L2.600 9.300h-2z" /><path d="M8 5c1 1.200 1 2.800 0 4" /><path d="M10.500 3c2 2.300 2 5.700 0 8M13 1c3 3.500 3 8.500 0 12" stroke="#777" /></svg>
        </div>
        <span className="tracking-[-0.300px]">ENG</span>
        <span>IN</span>
        <span className="mt-3 tracking-[-0.250px] whitespace-nowrap">01:46 PM</span>
        <span className="tracking-[-0.200px] whitespace-nowrap">03-03-2022</span>
        <svg viewBox="0 0 16 16" className="mt-[19px] mb-[16px] ml-px h-4 w-4"><path d="M0 0h16v10.500l-3 3H6L3.500 16v-2.500H0z" fill="#fff" /><path d="M3 3.500h10M3 6.500h10M3 9.500h5.500" stroke="#202020" strokeWidth="1.200" /><circle cx="12.500" cy="12.500" r="3.200" fill="#fff" stroke="#202020" /><path d="M10.500 12.500l4-2" stroke="#202020" /></svg>
      </div>
      <div className="h-1 w-full border-t border-[#8a8a8a]" />
      <span className="absolute top-[510px] right-0 h-[38px] w-px bg-[#76b9ed]" />
      <span className="absolute top-[651px] right-0 h-[38px] w-[3px] bg-[#5e93c0]" />
    </aside>
  );
}

function TrayPopup() {
  return (
    <div className="absolute top-[823px] left-[1737px] grid h-[122px] w-[121px] grid-cols-3 grid-rows-3 place-items-center border border-r-0 border-[#5b5f62] bg-linear-to-r from-[#34393d] from-70% to-[#4f4f4f] to-90% shadow-[-2px_2px_12px_rgba(0,0,0,0.4)]">
      <svg viewBox="0 0 16 16" className="h-4 w-4"><path d="M2 0c5 0 12 7 14 13-4 3-9 1-12-3S0 2 2 0z" fill="#0a0a0a" stroke="#ccc" strokeWidth=".8" /><path d="M4 8l6 2" stroke="#eee" /><circle cx="4.500" cy="10" r="3" fill="#ddd" /><path d="M1 14l5-2 4 3" stroke="#ccc" strokeWidth="1.500" fill="none" /></svg>
      <span className="flex h-[38px] w-[38px] items-center justify-center bg-[#505558]">
        <svg viewBox="0 0 16 18" className="h-[18px] w-4"><path d="M14 1v7M9 8L2 16M1 11v5" stroke="#9457c9" strokeWidth="2.500" /></svg>
      </span>
      <svg viewBox="0 0 13 16" className="h-4 w-[13px]"><path d="M0 2.500L2 .5h9l2 2V12c0 2-2 4-4 4H4c-2 0-4-2-4-4z" fill="#fff" /><path d="M1 1.500h5v5H1z" fill="#555" /><path d="M6.500 1v5.500M0 6.700h13" stroke="#444" strokeWidth=".8" /></svg>
      <svg viewBox="0 0 16 16" className="h-4 w-4"><path d="M7.500 0C9.500 1.500 12 2 15 2c0 6-1 10-7.500 13C1 12 0 8 0 2c3 0 5.500-.5 7.500-2z" fill="#fff" stroke="#111" /><path d="M7.500 1v13M1 7h13" stroke="#111" /><path d="M11.500 7.500L16 16H7z" fill="#fcc419" /><path d="M11.500 10v3M11.500 14v1.200" stroke="#111" strokeWidth="1.200" /></svg>
      <ChromeIcon className="h-[14px] w-[14px]" />
      <svg viewBox="0 0 13 16" className="h-4 w-[13px]"><path d="M3.500 0h6l3.500 3-1 8.500L6.500 16 1 11.500 0 3z" fill="#fb3c14" /><path d="M2 4l4.500-1.200L11 4l-1.200 4-1.800 1.500V12L6.500 13 5 12V9.500L3.200 8z" fill="#fff" /><path d="M4 5.500l1.500.8M9 5.500l-1.500.8M6.500 7v3" stroke="#fb3c14" /></svg>
      <span className="flex h-4 w-4 items-center justify-center rounded-[2px] bg-white"><DriveIcon className="h-[12px] w-[13px]" /></span>
      <svg viewBox="0 0 12 19" className="absolute top-[8px] left-[56px] h-[19px] w-3"><path d="M.7.900v15.600l3.700-3.500 2.400 5.300 2.300-1-2.300-5.200h4.700z" fill="#fff" stroke="#000" /></svg>
    </div>
  );
}

export default function App() {
  return (
    <div className={`relative flex h-[1079px] w-[1919px] overflow-hidden bg-black ${ui}`}>
      <div className="flex w-[1858px] shrink-0 flex-col">
        <TabStrip />
        <Toolbar />
        <BookmarksBar />
        <PageHeader />
        <div className="flex min-h-0 flex-1">
          <Main />
          <Scrollbar />
        </div>
      </div>
      <Taskbar />
      <div className="absolute top-[984px] left-[1540px] whitespace-nowrap text-[#8b989d]">
        <p className="text-[19px] leading-[25px] tracking-[0.050px]">Activate Windows</p>
        <p className="text-[14.500px] leading-[20px] tracking-[-0.04px]">Go to Settings to activate Windows.</p>
      </div>
      <TrayPopup />
    </div>
  );
}
